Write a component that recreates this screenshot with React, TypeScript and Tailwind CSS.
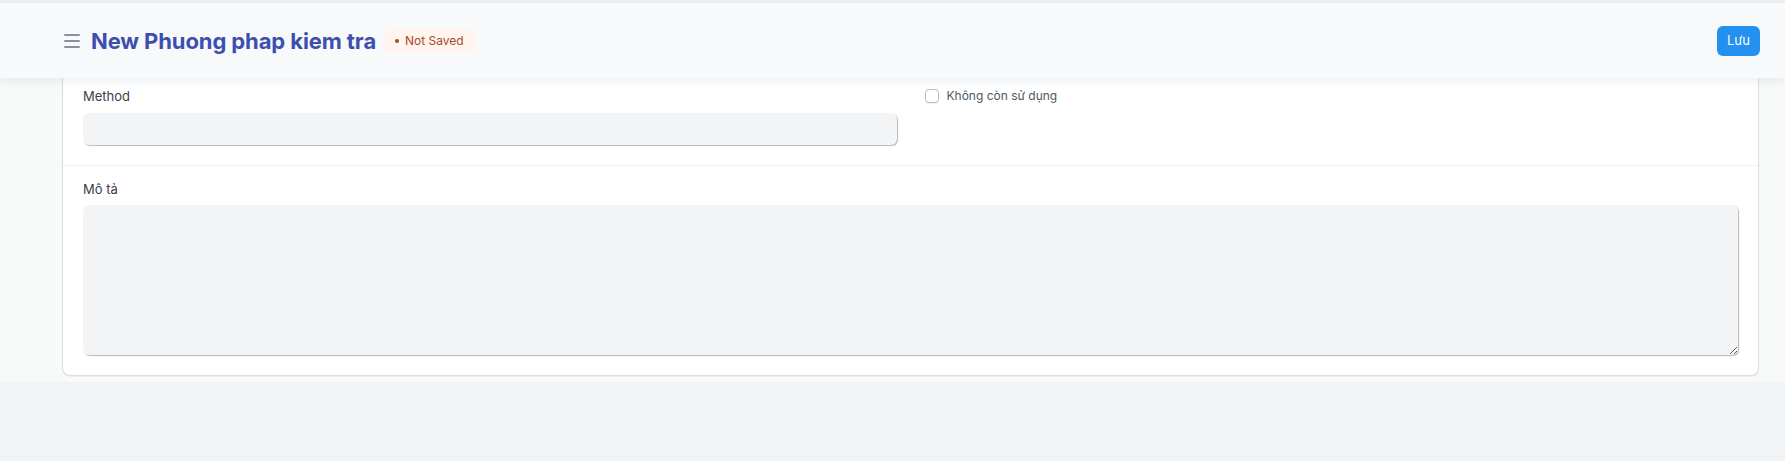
import React from "react";

const App = () => {
  return (
    <div className="min-h-[461px] w-full bg-[#f1f4f7] font-['Inter',sans-serif]">
      <div className="h-[3px] bg-[#eceef1]" />
      <div className="bg-[#f8f9f9] pb-[6px]">
        {/* page head */}
        <div className="relative z-10 h-[75px] bg-[#f8f9fa] shadow-[0_4px_8px_rgba(30,50,90,0.07)]">
          <div className="flex h-full items-center pl-[64px] pr-[25px]">
            <button className="flex h-4 w-4 flex-col justify-between py-[1px] mr-[11px]">
              <span className="block h-[2px] w-4 rounded bg-[#8a939c]" />
              <span className="block h-[2px] w-4 rounded bg-[#8a939c]" />
              <span className="block h-[2px] w-4 rounded bg-[#8a939c]" />
            </button>
            <h1 className="text-[22px] font-bold leading-none tracking-[-0.1px] text-[#3d4fae]">
              New Phuong phap kiem tra
            </h1>
            <span className="ml-2 flex h-6 items-center gap-[6px] rounded-md bg-[#fff4ee] pl-[11px] pr-[11px] text-[12px] text-[#a9492a]">
              <span className="h-1 w-1 rounded-full bg-[#a9492a]" />
              Not Saved
            </span>
            <button className="ml-auto h-[30px] rounded-md bg-[#2490ef] px-[10px] text-[13px] text-white">
              Lưu
            </button>
          </div>
        </div>

        {/* form card */}
        <div className="ml-[62px] mr-[26px] rounded-b-lg border border-t-0 border-[#d9dce0] bg-white shadow-[0_1px_1px_rgba(0,0,0,0.05)]">
          <div className="grid grid-cols-2 gap-[28px] px-5 pt-[10px] pb-[20px]">
            <div>
              <label className="mb-[9px] block h-4 text-[13px] leading-4 text-[#38424b]">
                Method
              </label>
              <input className="block h-8 w-full rounded-md bg-[#f3f4f6] px-2 text-[13px] shadow-[1px_1px_1px_rgba(0,0,0,0.28)] outline-none" />
            </div>
            <div>
              <label className="flex items-center gap-2 text-[12px] leading-4 text-[#4d5760]">
                <span className="block h-[14px] w-[14px] rounded-[4px] border border-[#b8bdc3] bg-white shadow-[0_1px_1px_rgba(0,0,0,0.06)]" />
                Không còn sử dụng
              </label>
            </div>
          </div>
          <div className="border-t border-[#eff0f2] px-5 pt-[15px] pb-5">
            <label className="mb-2 block h-4 text-[13px] leading-4 text-[#38424b]">
              Mô tả
            </label>
            <textarea className="block h-[150px] w-full rounded-md bg-[#f3f4f6] p-2 text-[13px] shadow-[1px_1px_1px_rgba(0,0,0,0.28)] outline-none" />
          </div>
        </div>
      </div>
    </div>
  );
};

export default App;
